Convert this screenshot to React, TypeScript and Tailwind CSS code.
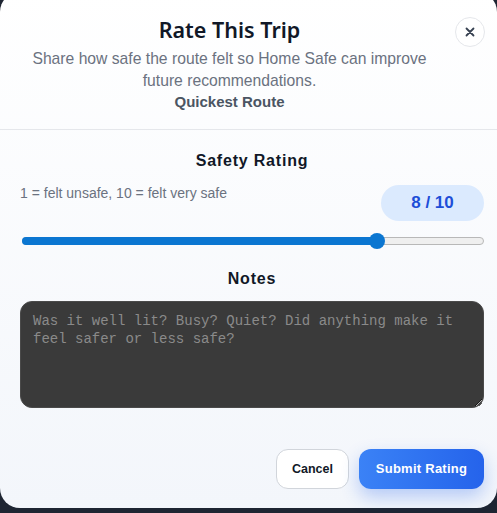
import React from "react";

export default function App() {
  const value = 8;
  const pct = ((value - 1) / 9) * 100;
  return (
    <div className="w-[497px] h-[513px] overflow-hidden bg-[#1e2532]" style={{ fontFamily: '"Liberation Sans", Arial, sans-serif' }}>
      <div className="-mt-[8px] h-[516px] rounded-[20px] bg-gradient-to-b from-white to-[#f3f6fb] flex flex-col">
        <div className="flex items-start pl-[12px] pr-[12px] pt-[22px] pb-[17px] border-b border-[#e5e7eb] gap-[8px]">
          <div className="flex-1 flex flex-col items-center">
            <h2 className="text-[21.5px] leading-[32px] font-semibold text-[#111827]" style={{ fontFamily: '"Noto Sans", sans-serif' }}>
              Rate This Trip
            </h2>
            <p className="mt-[2px] max-w-[410px] text-center text-[15.7px] leading-[22px] text-[#6b7280]">
              Share how safe the route felt so Home Safe can improve future recommendations.
            </p>
            <p className="text-[15px] leading-[20px] font-bold text-[#4b5563]">Quickest Route</p>
          </div>
          <button className="mt-[3px] w-[30px] h-[30px] rounded-full border border-[#e5e7eb] bg-white flex items-center justify-center text-[#374151]">
            <svg width="10" height="10" viewBox="0 0 10 10">
              <path d="M1.5 1.5 L8.5 8.5 M8.5 1.5 L1.5 8.5" stroke="#374151" strokeWidth="1.8" strokeLinecap="round" />
            </svg>
          </button>
        </div>

        <div className="flex flex-col pl-[20px] pr-[13px] pt-[20px]">
          <div className="text-center text-[16px] leading-[22px] font-bold tracking-[0.05em] text-[#111827]">Safety Rating</div>
          <div className="mt-[13px] flex items-start justify-between">
            <span className="text-[14px] leading-[16px] text-[#6b7280]">1 = felt unsafe, 10 = felt very safe</span>
            <span className="w-[103px] h-[36px] rounded-full bg-[#dbeafe] flex items-center justify-center text-[17px] font-bold text-[#1d4ed8]">
              8 / 10
            </span>
          </div>
          <div className="mt-[12px] relative h-[16px] ml-[2px] flex items-center">
            <div className="w-full h-[8px] rounded-full bg-[#efefef] border border-[#b8b8b8]" />
            <div className="absolute left-0 h-[8px] rounded-full bg-[#0b76d1]" style={{ width: `calc(${pct}% - ${pct * 0.16}px + 8px)` }} />
            <div className="absolute w-[16px] h-[16px] rounded-full bg-[#0b76d1]" style={{ left: `calc(${pct}% - ${pct * 0.16}px)` }} />
          </div>
          <div className="mt-[19px] text-center text-[16px] leading-[22px] font-bold tracking-[0.05em] text-[#111827]">Notes</div>
          <textarea
            className="mt-[11px] h-[107px] w-full resize-y rounded-[12px] border border-[#4a4a4a] bg-[#3a3a3a] px-[12px] py-[10px] text-[14px] leading-[18px] text-white placeholder:text-[#8a8a8a] outline-none"
            style={{ fontFamily: '"Liberation Mono", monospace' }}
            placeholder="Was it well lit? Busy? Quiet? Did anything make it feel safer or less safe?"
          />
          <div className="mt-[41px] flex justify-end gap-[10px]">
            <button className="w-[73px] h-[40px] rounded-[12px] border border-[#d1d5db] bg-white text-[12.5px] font-semibold text-[#111827]">
              Cancel
            </button>
            <button className="w-[125px] h-[40px] rounded-[12px] bg-gradient-to-r from-[#3b82f6] to-[#2563eb] text-[13px] font-bold tracking-[0.02em] text-white shadow-[0_8px_18px_rgba(37,99,235,0.3)]">
              Submit Rating
            </button>
          </div>
        </div>
      </div>
    </div>
  );
}
